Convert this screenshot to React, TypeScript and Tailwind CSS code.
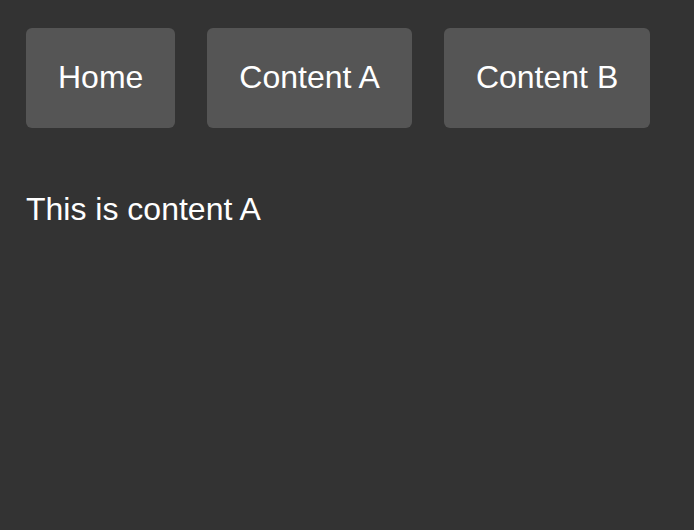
import { useState } from 'react'

const tabs = ['Home', 'Content A', 'Content B']

export default function App() {
  const [active, setActive] = useState('Content A')

  return (
    <div className="min-h-screen bg-[#333333] pl-[26px] pt-[28px] text-white" style={{ fontFamily: '"Liberation Sans", Arial, sans-serif' }}>
      {/* Nav buttons */}
      <div className="flex gap-[32px]">
        {tabs.map((tab) => (
          <button
            key={tab}
            onClick={() => setActive(tab)}
            className="rounded-md bg-[#555555] px-[32px] pt-[31px] pb-[33px] text-[32px] leading-[36px] text-white"
          >
            {tab}
          </button>
        ))}
      </div>

      <p className="mt-[63px] text-[32px] leading-[36px]">
        {active === 'Home' ? 'This is home' : `This is content ${active.slice(-1)}`}
      </p>
    </div>
  )
}
